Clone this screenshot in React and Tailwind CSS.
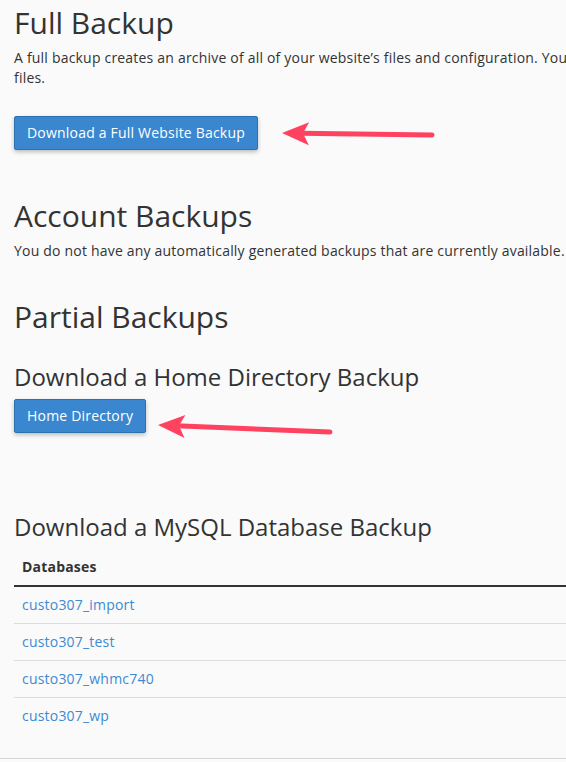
const databases = ["custo307_import", "custo307_test", "custo307_whmc740", "custo307_wp"];

// red annotation arrow, tip at (x1,y1), tail at (x2,y2)
function Arrow({ x1, y1, x2, y2 }) {
  const len = Math.hypot(x2 - x1, y2 - y1);
  const angle = (Math.atan2(y2 - y1, x2 - x1) * 180) / Math.PI;
  return (
    <g transform={`translate(${x1} ${y1}) rotate(${angle})`}>
      <line x1="18" y1="0" x2={len} y2="0" stroke="#ff4260" strokeWidth="5" strokeLinecap="round" />
      <path d="M0 0 L27 -11 L21 0 L27 12 Z" fill="#ff4260" />
    </g>
  );
}

export default function App() {
  return (
    <div
      className="relative w-[566px] h-[762px] overflow-hidden bg-[#fafafa] text-[#333]"
      style={{ fontFamily: '"Open Sans", "Noto Sans", sans-serif' }}
    >
      <div className="w-[900px] pl-[14px] pt-[6px]">
        {/* Full Backup */}
        <h1 className="text-[30px] leading-[33px] font-normal">Full Backup</h1>
        <p className="mt-[9px] text-[14px] leading-[20px] tracking-[0.2px]">
          <span className="whitespace-nowrap">
            A full backup creates an archive of all of your website’s files and configuration. You can use this file to move your account to another server or to keep a local copy of your
          </span>
          <br />
          files.
        </p>
        <button className="mt-[28px] h-[34px] px-[12px] text-[14px] leading-[20px] tracking-[0.2px] text-white bg-[#3a87cf] border border-[#2c70b0] rounded-[2px] shadow-[0_2px_4px_rgba(0,0,0,0.25)]">
          Download a Full Website Backup
        </button>

        {/* Account Backups */}
        <h2 className="mt-[49px] text-[30px] leading-[33px] font-normal">Account Backups</h2>
        <p className="mt-[9px] text-[14px] leading-[20px] tracking-[0.2px]">
          You do not have any automatically generated backups that are currently available.
        </p>

        {/* Partial Backups */}
        <h2 className="mt-[39px] text-[30px] leading-[33px] font-normal">Partial Backups</h2>
        <h3 className="mt-[31px] text-[24px] leading-[26px] font-normal">Download a Home Directory Backup</h3>
        <button className="mt-[9px] h-[34px] px-[12px] text-[14px] leading-[20px] tracking-[0.2px] text-white bg-[#3a87cf] border border-[#2c70b0] rounded-[2px] shadow-[0_2px_4px_rgba(0,0,0,0.25)]">
          Home Directory
        </button>

        <h3 className="mt-[81px] text-[24px] leading-[26px] font-normal">Download a MySQL Database Backup</h3>
        <table className="mt-[9px] w-full text-[14px] leading-[20px] tracking-[0.2px] border-collapse">
          <thead>
            <tr>
              <th className="text-left font-bold px-[8px] py-[8px] border-b-[2px] border-[#333]">Databases</th>
            </tr>
          </thead>
          <tbody>
            {databases.map((db, i) => (
              <tr key={db} className={i > 0 ? "border-t border-[#ddd]" : ""}>
                <td className="px-[8px] py-[8px]">
                  <a href="#" className="text-[#3d8ad2]">{db}</a>
                </td>
              </tr>
            ))}
          </tbody>
        </table>
      </div>

      <div className="absolute left-0 right-0 top-[758px] border-t border-[#d6d6d6]" />

      <svg className="absolute inset-0 pointer-events-none" width="566" height="762">
        <Arrow x1={282} y1={133} x2={432} y2={135} />
        <Arrow x1={158} y1={425} x2={330} y2={432} />
      </svg>
    </div>
  );
}
